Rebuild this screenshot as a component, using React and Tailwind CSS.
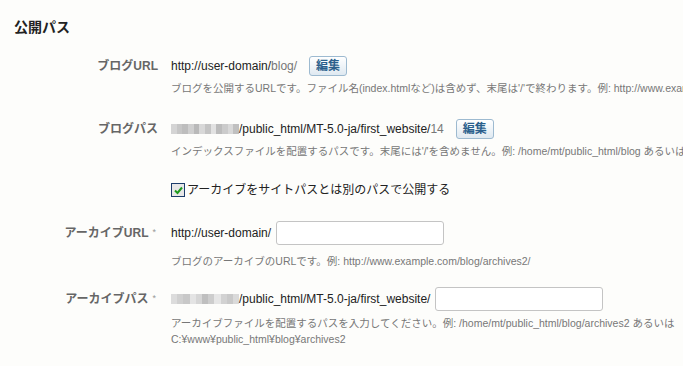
const font = {
  fontFamily: '"Liberation Sans", "Noto Sans CJK JP", sans-serif',
};

const blurA = ["#d4d4d4", "#c6c6c6", "#bdbdbd", "#cfcfcf", "#b9b9b9", "#d8d8d8", "#c4c4c4", "#e2e2e2", "#bcbcbc", "#cbcbcb", "#d9d9d9", "#c0c0c0"];
const blurB = ["#dcdcdc", "#d0d0d0", "#c8c8c8", "#e4e4e4", "#d6d6d6", "#bfbfbf", "#cdcdcd", "#e6e6e6", "#d2d2d2", "#c9c9c9", "#dadada"];

function Blur({ shades }) {
  return (
    <span className="inline-flex h-[10px] w-[68px] shrink-0 overflow-hidden">
      {shades.map((c, i) => (
        <span key={i} className="h-full flex-1" style={{ background: c }} />
      ))}
    </span>
  );
}

function EditButton() {
  return (
    <button className="ml-[12px] h-[20px] rounded-[3px] border border-[#9dbad0] bg-gradient-to-b from-white to-[#dfe9f1] px-[6px] text-[12px] font-bold leading-[18px] text-[#2a5f8c]">
      編集
    </button>
  );
}

function Label({ children, req }) {
  return (
    <div className="flex items-center justify-end text-[12px] font-bold text-[#666]">
      {children}
      {req && <span className="ml-[4px] mr-[2px] text-[9px] font-normal text-[#999]">*</span>}
    </div>
  );
}

function Hint({ children, className = "" }) {
  return (
    <div className={"whitespace-nowrap text-[10.5px] leading-[16px] text-[#777] " + className}>
      {children}
    </div>
  );
}

export default function App() {
  return (
    <div className="h-[366px] w-[683px] overflow-hidden bg-[#fdfdfb]" style={font}>
      <h2 className="ml-[14px] mt-[18px] text-[14px] font-bold leading-[18px] text-[#222]">
        公開パス
      </h2>

      <div className="mt-[19px] grid grid-cols-[158px_1fr] gap-x-[13px]">
        <Label>ブログURL</Label>
        <div className="flex h-[22px] items-center whitespace-nowrap text-[12px] text-[#222]">
          http://user-domain/<span className="text-[#777]">blog/</span>
          <EditButton />
        </div>
        <div />
        <Hint className="mt-[3px]">
          ブログを公開するURLです。ファイル名(index.htmlなど)は含めず、末尾は'/'で終わります。例: http://www.example.com/blog/
        </Hint>
      </div>

      <div className="mt-[22px] grid grid-cols-[158px_1fr] gap-x-[13px]">
        <Label>ブログパス</Label>
        <div className="flex h-[22px] items-center whitespace-nowrap text-[12px] text-[#222]">
          <Blur shades={blurA} />
          /public_html/MT-5.0-ja/first_website/<span className="text-[#777]">14</span>
          <EditButton />
        </div>
        <div />
        <Hint className="mt-[3px]">
          インデックスファイルを配置するパスです。末尾には'/'を含めません。例: /home/mt/public_html/blog あるいは C:\www\public_html\blog
        </Hint>
      </div>

      <div className="mt-[22px] grid grid-cols-[158px_1fr] gap-x-[13px]">
        <div />
        <label className="flex h-[18px] items-center whitespace-nowrap text-[12px] text-[#222]">
          <span className="mr-[2px] flex h-[14px] w-[14px] items-center justify-center border border-[#1d3d6b] bg-[#e8e8e8]">
            <svg width="9" height="9" viewBox="0 0 9 9">
              <path d="M1 4.5 L3.5 7 L8 1.5" fill="none" stroke="#1e9a1e" strokeWidth="2" />
            </svg>
          </span>
          アーカイブをサイトパスとは別のパスで公開する
        </label>
      </div>

      <div className="mt-[22px] grid grid-cols-[158px_1fr] gap-x-[13px]">
        <Label req>アーカイブURL</Label>
        <div className="flex h-[24px] items-center whitespace-nowrap text-[12px] text-[#222]">
          http://user-domain/
          <input className="ml-[5px] h-[24px] w-[168px] rounded-[3px] border border-[#c4c4c4] bg-white outline-none" />
        </div>
        <div />
        <Hint className="mt-[8px]">
          ブログのアーカイブのURLです。例: http://www.example.com/blog/archives2/
        </Hint>
      </div>

      <div className="mt-[18px] grid grid-cols-[158px_1fr] gap-x-[13px]">
        <Label req>アーカイブパス</Label>
        <div className="flex h-[24px] items-center whitespace-nowrap text-[12px] text-[#222]">
          <Blur shades={blurB} />
          /public_html/MT-5.0-ja/first_website/
          <input className="ml-[5px] h-[24px] w-[168px] rounded-[3px] border border-[#c4c4c4] bg-white outline-none" />
        </div>
        <div />
        <Hint className="mt-[4px]">
          アーカイブファイルを配置するパスを入力してください。例: /home/mt/public_html/blog/archives2 あるいは
          <br />
          C:¥www¥public_html¥blog¥archives2
        </Hint>
      </div>
    </div>
  );
}
